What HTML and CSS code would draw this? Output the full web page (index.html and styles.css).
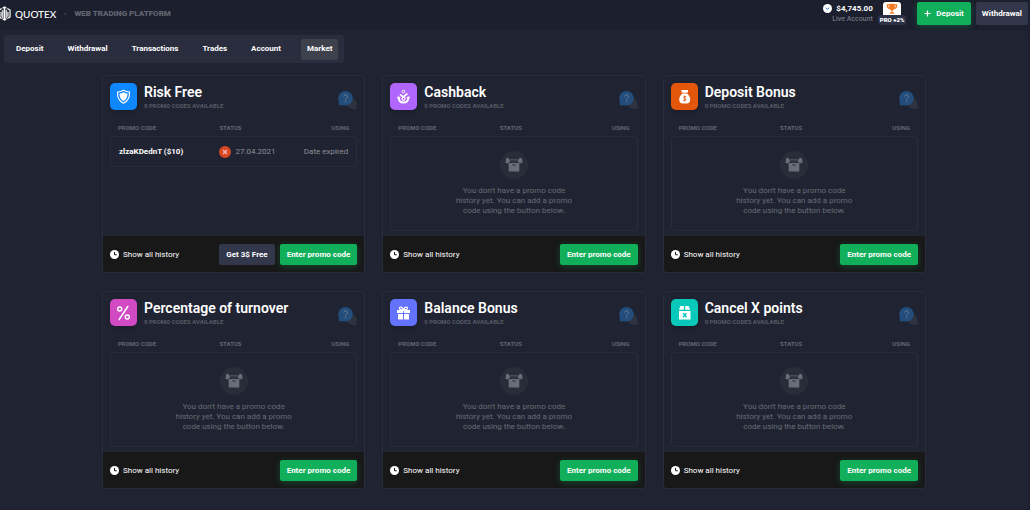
FILE: index.html
```html
<!DOCTYPE html>
<html lang="en">
<head>
<meta charset="utf-8">
<title>Quotex – Market</title>
<link rel="stylesheet" href="styles.css">
</head>
<body>
<svg class="sprite" aria-hidden="true">
  <symbol id="clock" viewBox="0 0 18 18"><circle cx="9" cy="9" r="9" fill="#fff"/><path d="M9 4v5.500h4.500" fill="none" stroke="#181818" stroke-width="2"/></symbol>
  <symbol id="help-bubble" viewBox="0 0 19 18">
    <circle cx="13.500" cy="12.500" r="5" fill="#2f3340"/><path d="M18.500 12.500v5.500h-5z" fill="#2f3340"/>
    <circle cx="7.500" cy="7.300" r="7.300" fill="#234d7b"/><path d="M.8 8v6.300h6z" fill="#234d7b"/>
    <path d="M5.700 5.500a1.900 1.900 0 1 1 3 1.700c-.8.500-1.100.8-1.100 1.700" fill="none" stroke="#7c8796" stroke-width=".9"/><circle cx="7.600" cy="10.600" r=".6" fill="#7c8796"/>
  </symbol>
  <symbol id="box" viewBox="0 0 28 28">
    <circle cx="14" cy="14" r="14" fill="#292d3a"/>
    <path d="M6.200 7.200l2.300-.4.700 1.600h9.600l.7-1.600 2.300.4.900 4.500-3.200.8-.8-1.700H9.300l-.8 1.700-3.200-.8z" fill="#696d77"/>
    <path d="M10 9.300h8v1.500h-8z" fill="#292d3a"/>
    <path d="M8.700 12h10.600v8.500H8.700z" fill="#696d77"/><path d="M12 13.600h4v1h-4z" fill="#343844"/>
  </symbol>
</svg>

<header class="topbar">
  <a class="brand" href="#">
    <svg class="brand-mark" viewBox="0 0 14 16" fill="none" stroke="#fff" stroke-width="1.300"><path d="M4 2.500L1 4.300v7.400l3 1.800M10 2.500l3 1.800v7.400l-3 1.800M3.300 6v5.500M5.200 4v9M7 1v14M8.800 4v9M10.700 6v5.500M5 2.200L7 1l2 1.200M5 13.800L7 15l2-1.200"/></svg>
    <span class="brand-name">QUOTEX</span>
  </a>
  <span class="dot"></span>
  <span class="tagline">WEB TRADING PLATFORM</span>
  <div class="account">
    <div class="balance"><svg class="balance-icon" viewBox="0 0 18 18"><circle cx="9" cy="9" r="9" fill="#fff"/><path d="M5.500 7.500L9 10.500l3.500-3" fill="none" stroke="#3a7bd5" stroke-width="2"/></svg><span>$4,745.00</span></div>
    <div class="account-type">Live Account</div>
  </div>
  <div class="level">
    <div class="level-cup"><svg viewBox="0 0 14 14"><path d="M4 2h6v4a3 3 0 0 1-6 0z" fill="#f57a1f"/><path d="M4 3H2c0 2.500.8 3.800 2.500 4M10 3h2c0 2.500-.8 3.800-2.500 4M7 8v4M4.500 12h5" fill="none" stroke="#f57a1f" stroke-width="1.400"/></svg></div>
    <div class="level-label">PRO +2%</div>
  </div>
  <button class="btn btn-top btn-green" type="button"><svg class="plus" viewBox="0 0 8 8"><path d="M4 .5v7M.5 4h7" stroke="#fff" stroke-width="1.400"/></svg>Deposit</button>
  <button class="btn btn-top btn-grey" type="button">Withdrawal</button>
</header>

<main class="page">
  <nav class="tabs">
    <a href="#">Deposit</a><a href="#">Withdrawal</a><a href="#">Transactions</a><a href="#">Trades</a><a href="#">Account</a><a class="active" href="#" aria-current="page">Market</a>
  </nav>

  <div class="cards">
    <section class="card">
      <header class="card-head">
        <div class="tile blue"><svg viewBox="0 0 27 27"><path d="M13.500 7.200c2 1.200 3.800 1.600 6 1.800.3 5.500-1.300 9-6 11.200-4.700-2.200-6.300-5.700-6-11.200 2.200-.2 4-.6 6-1.800z" fill="none" stroke="#fff" stroke-width="1.200"/><path d="M13.500 9.300c1.300.8 2.600 1.200 4 1.300 0 3.600-1 5.900-4 7.600-3-1.700-4-4-4-7.600 1.400-.1 2.700-.5 4-1.300z" fill="#fff"/></svg></div>
        <div class="heading"><h2>Risk Free</h2><p>0 PROMO CODES AVAILABLE</p></div>
        <button class="help" type="button" aria-label="Help"><svg><use href="#help-bubble"/></svg></button>
      </header>
      <table class="codes">
        <thead><tr><th>PROMO CODE</th><th>STATUS</th><th>USING</th></tr></thead>
        <tbody><tr class="entry"><td>zlzaKDednT ($10)</td><td><div class="status"><svg viewBox="0 0 12 12"><circle cx="6" cy="6" r="6" fill="#d6481f"/><path d="M4 4l4 4M8 4L4 8" stroke="#f7b7ba" stroke-width="1.300"/></svg>27.04.2021</div></td><td>Date expired</td></tr></tbody>
      </table>
      <footer class="card-foot">
        <a class="history" href="#"><svg><use href="#clock"/></svg>Show all history</a>
        <button class="btn btn-grey" type="button">Get 3$ Free</button>
        <button class="btn btn-green" type="button">Enter promo code</button>
      </footer>
    </section>

    <section class="card">
      <header class="card-head">
        <div class="tile purple"><svg viewBox="0 0 27 27" fill="none" stroke="#fff"><circle cx="13.500" cy="8.500" r="1.300" stroke-width="1"/><path d="M8.500 14c.2 3.800 2 5.600 5 5.600s4.800-1.800 5-5.600" stroke-width="2"/><path d="M7.500 14.200l2.600 1M19.500 14.200l-2.600 1" stroke-width="1.800"/><path d="M10 11.500l3.300 2.500 4.200-3.500" stroke-width="1.700"/><circle cx="13.500" cy="15.800" r="1.500" stroke-width="1.200"/></svg></div>
        <div class="heading"><h2>Cashback</h2><p>0 PROMO CODES AVAILABLE</p></div>
        <button class="help" type="button" aria-label="Help"><svg><use href="#help-bubble"/></svg></button>
      </header>
      <table class="codes">
        <thead><tr><th>PROMO CODE</th><th>STATUS</th><th>USING</th></tr></thead>
        <tbody><tr><td class="empty" colspan="3"><svg><use href="#box"/></svg><p>You don't have a promo code<br>history yet. You can add a promo<br>code using the button below.</p></td></tr></tbody>
      </table>
      <footer class="card-foot">
        <a class="history" href="#"><svg><use href="#clock"/></svg>Show all history</a>
        <button class="btn btn-green" type="button">Enter promo code</button>
      </footer>
    </section>

    <section class="card">
      <header class="card-head">
        <div class="tile orange"><svg viewBox="0 0 27 27"><path d="M10.500 7h6.500v2.200l-1 .6h-4.500l-1-.6zM11.500 10.500h4.500c2 1.500 3.200 3.700 3.200 6 0 2.700-1.400 4-3.500 4h-4c-2.100 0-3.500-1.300-3.500-4 0-2.300 1.300-4.500 3.300-6z" fill="#fff"/><path d="M15 13.800c-2.600-1-3.300 1-1.300 1.700 2 .7 1.300 2.700-1.300 1.700M13.700 12.700v5.600" fill="none" stroke="#e2570c" stroke-width=".9"/></svg></div>
        <div class="heading"><h2>Deposit Bonus</h2><p>0 PROMO CODES AVAILABLE</p></div>
        <button class="help" type="button" aria-label="Help"><svg><use href="#help-bubble"/></svg></button>
      </header>
      <table class="codes">
        <thead><tr><th>PROMO CODE</th><th>STATUS</th><th>USING</th></tr></thead>
        <tbody><tr><td class="empty" colspan="3"><svg><use href="#box"/></svg><p>You don't have a promo code<br>history yet. You can add a promo<br>code using the button below.</p></td></tr></tbody>
      </table>
      <footer class="card-foot">
        <a class="history" href="#"><svg><use href="#clock"/></svg>Show all history</a>
        <button class="btn btn-green" type="button">Enter promo code</button>
      </footer>
    </section>

    <section class="card">
      <header class="card-head">
        <div class="tile pink"><svg viewBox="0 0 27 27" fill="none" stroke="#fff" stroke-width="1.500"><circle cx="9.700" cy="10" r="2"/><circle cx="17.300" cy="18" r="2"/><path d="M17.800 7.500L9.200 20.500" stroke-linecap="round"/></svg></div>
        <div class="heading"><h2>Percentage of turnover</h2><p>0 PROMO CODES AVAILABLE</p></div>
        <button class="help" type="button" aria-label="Help"><svg><use href="#help-bubble"/></svg></button>
      </header>
      <table class="codes">
        <thead><tr><th>PROMO CODE</th><th>STATUS</th><th>USING</th></tr></thead>
        <tbody><tr><td class="empty" colspan="3"><svg><use href="#box"/></svg><p>You don't have a promo code<br>history yet. You can add a promo<br>code using the button below.</p></td></tr></tbody>
      </table>
      <footer class="card-foot">
        <a class="history" href="#"><svg><use href="#clock"/></svg>Show all history</a>
        <button class="btn btn-green" type="button">Enter promo code</button>
      </footer>
    </section>

    <section class="card">
      <header class="card-head">
        <div class="tile indigo"><svg viewBox="0 0 27 27"><path d="M7 11h6v3H7zM14 11h6v3h-6zM8 15h5v5.500H8zM14 15h5v5.500h-5z" fill="#fff"/><path d="M13.500 11c-1-3.500-4-3.700-4-1.700 0 1.200 2 1.700 4 1.700 2 0 4-.5 4-1.700 0-2-3-1.800-4 1.700z" fill="none" stroke="#fff" stroke-width="1.200"/></svg></div>
        <div class="heading"><h2>Balance Bonus</h2><p>0 PROMO CODES AVAILABLE</p></div>
        <button class="help" type="button" aria-label="Help"><svg><use href="#help-bubble"/></svg></button>
      </header>
      <table class="codes">
        <thead><tr><th>PROMO CODE</th><th>STATUS</th><th>USING</th></tr></thead>
        <tbody><tr><td class="empty" colspan="3"><svg><use href="#box"/></svg><p>You don't have a promo code<br>history yet. You can add a promo<br>code using the button below.</p></td></tr></tbody>
      </table>
      <footer class="card-foot">
        <a class="history" href="#"><svg><use href="#clock"/></svg>Show all history</a>
        <button class="btn btn-green" type="button">Enter promo code</button>
      </footer>
    </section>

    <section class="card">
      <header class="card-head">
        <div class="tile teal"><svg viewBox="0 0 27 27"><path d="M9.500 7h3.300v3.800H7.800zM14.200 7h3.300l1.700 3.800h-5zM8 12h11.500v8.500H8z" fill="#fff"/><path d="M12 14.200l3.500 4M15.500 14.200l-3.500 4" stroke="#08c9b9" stroke-width="1.400"/></svg></div>
        <div class="heading"><h2>Cancel X points</h2><p>0 PROMO CODES AVAILABLE</p></div>
        <button class="help" type="button" aria-label="Help"><svg><use href="#help-bubble"/></svg></button>
      </header>
      <table class="codes">
        <thead><tr><th>PROMO CODE</th><th>STATUS</th><th>USING</th></tr></thead>
        <tbody><tr><td class="empty" colspan="3"><svg><use href="#box"/></svg><p>You don't have a promo code<br>history yet. You can add a promo<br>code using the button below.</p></td></tr></tbody>
      </table>
      <footer class="card-foot">
        <a class="history" href="#"><svg><use href="#clock"/></svg>Show all history</a>
        <button class="btn btn-green" type="button">Enter promo code</button>
      </footer>
    </section>
  </div>
</main>
</body>
</html>
```
FILE: styles.css
```css
* { box-sizing: border-box; }
body {
  margin: 0;
  min-height: 100vh;
  display: flex;
  flex-direction: column;
  background: #1c1f2d;
  color: #fff;
  font-family: Roboto, "Liberation Sans", sans-serif;
  font-size: 8px;
  line-height: 10px;
}
h2, p { margin: 0; }
a { color: inherit; text-decoration: none; }
svg { display: block; }
.sprite { position: absolute; width: 0; height: 0; }

.btn {
  display: flex;
  align-items: center;
  justify-content: center;
  gap: 5px;
  height: 21px;
  padding: 0 7px;
  border: 0;
  border-radius: 2px;
  color: #fff;
  font: 700 8px/10px Roboto, "Liberation Sans", sans-serif;
  white-space: nowrap;
}
.btn-green { background: #11af59; box-shadow: 0 2px 6px rgba(17, 175, 89, .3); }
.btn-grey { background: #32374c; }
.btn-top { height: 23px; }

.topbar {
  display: flex;
  align-items: center;
  height: 30px;
  padding: 0 2px 3px 0;
}
.brand { display: flex; align-items: center; gap: 4px; }
.brand-mark { width: 13px; height: 15px; margin-left: -2px; }
.brand-name { font: 500 10px/14px Lato, sans-serif; }
.dot { width: 2px; height: 2px; margin: 0 8px; border-radius: 1px; background: #3a3e4c; }
.tagline { color: #606470; font-weight: 900; }
.account { margin-left: auto; text-align: right; }
.balance { display: flex; align-items: center; justify-content: flex-end; gap: 4px; font-weight: 700; line-height: 11px; }
.balance-icon { width: 9px; height: 9px; }
.account-type { color: #70747f; font-size: 7px; font-weight: 500; line-height: 11px; }
.level { display: flex; flex-direction: column; align-items: center; margin: 0 11px 0 5px; }
.level-cup { padding: 0 2px; border-radius: 3px 3px 0 0; background: #fff; }
.level-cup svg { width: 14px; height: 13px; }
.level-label { padding: 0 2px; border-radius: 2px; background: #2d3145; font-size: 6px; font-weight: 900; }
.plus { width: 7px; height: 7px; }
.topbar .btn-grey { margin-left: 5px; padding: 0 6px; }

.page {
  flex: 1;
  margin-right: 2px;
  padding: 5px 4px 21px;
  border-radius: 0 4px 0 0;
  background: #202432;
}
.tabs {
  display: flex;
  align-items: center;
  gap: 4px;
  width: fit-content;
  padding: 4px 6px 3px 2px;
  border-radius: 3px;
  background: #292d3e;
}
.tabs a { padding: 5px 10px 6px; border-radius: 2px; font-weight: 700; }
.tabs .active { margin-left: 6px; padding: 5px 6px 6px; background: #3e404b; }

.cards {
  display: grid;
  grid-template-columns: repeat(3, 1fr);
  gap: 18px 17px;
  max-width: 824px;
  margin: 12px auto 0;
}
.card {
  display: flex;
  flex-direction: column;
  border: 1px solid #292d3b;
  border-radius: 4px;
  overflow: hidden;
}
.card-head { display: flex; padding: 7px 7px 0; }
.tile { width: 27px; height: 27px; border-radius: 5px; box-shadow: 0 2px 5px rgba(0, 0, 0, .2); }
.tile svg { width: 27px; height: 27px; }
.blue { background: #0f87ff; }
.purple { background: #b066fc; }
.orange { background: #e2570c; }
.pink { background: #d14ac3; }
.indigo { background: #6473fd; }
.teal { background: #08c9b9; }
.heading { flex: 1; padding-left: 7px; }
.heading h2 { font-size: 14px; font-weight: 600; line-height: 18px; }
.heading p { color: #565a66; font-size: 6px; font-weight: 700; line-height: 9px; }
.help { align-self: flex-start; margin-top: 8px; padding: 0; border: 0; background: none; }
.help svg { width: 19px; height: 18px; }

.codes {
  align-self: stretch;
  margin: 9px 7px 5px;
  border-spacing: 0;
  table-layout: fixed;
}
.codes th {
  height: 17px;
  padding: 0 8px;
  color: #626671;
  font-size: 6px;
  font-weight: 700;
  line-height: 8px;
  text-align: left;
}
.codes th:nth-child(1) { width: 41%; }
.codes th:nth-child(2) { width: 27%; }
.codes td { padding: 0 8px; }
.codes th:last-child, .entry td:last-child { text-align: right; }
.entry td { height: 31px; border: 1px solid #292d3b; border-width: 1px 0; color: #8c8f98; }
.entry td:first-child { border-left-width: 1px; border-radius: 4px 0 0 4px; color: #fff; font-weight: 700; }
.entry td:last-child { border-right-width: 1px; border-radius: 0 4px 4px 0; }
.status { display: flex; align-items: center; gap: 4px; }
.status svg { width: 12px; height: 12px; }
.codes .empty {
  height: 95px;
  padding: 0 8px;
  border: 1px solid #292d3b;
  border-radius: 4px;
  color: #686c77;
  text-align: center;
}
.empty svg { width: 28px; height: 28px; margin: 0 auto 7px; }
.card-foot {
  display: flex;
  align-items: center;
  gap: 5px;
  margin-top: auto;
  padding: 8px 7px 7px;
  background: #181818;
}
.history { display: flex; align-items: center; gap: 4px; margin-right: auto; }
.history svg { width: 9px; height: 9px; }
```
